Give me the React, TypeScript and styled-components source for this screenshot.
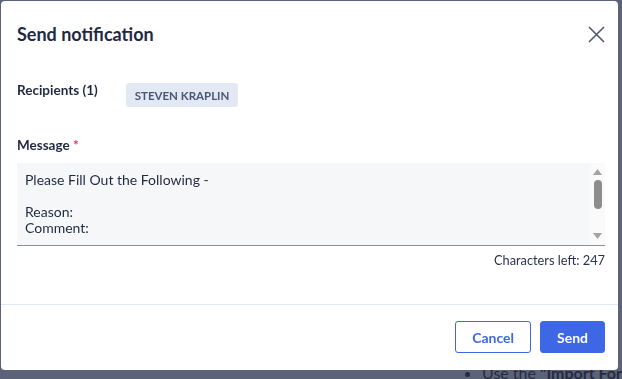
import React from "react";
import styled, { createGlobalStyle } from "styled-components";

const Global = createGlobalStyle`
  html, body {
    margin: 0;
    padding: 0;
    background: #5c6277;
    font-family: Lato, "Open Sans", sans-serif;
    overflow: hidden;
  }
`;

const message = `Please Fill Out the Following -

Reason:
Comment:


`;

export default function App() {
  return (
    <>
      <Global />
      <Page>
        <BulletList>
          <li>
            Use the <b>"Import Form"</b>
          </li>
        </BulletList>
      </Page>
      <Overlay>
        <Modal>
          <Header>
            <h2>Send notification</h2>
            <CloseButton aria-label="Close">
              <svg width="17" height="17" viewBox="0 0 17 17">
                <path d="M1 1 L16 16 M16 1 L1 16" stroke="#4b5472" strokeWidth="1.5" fill="none" />
              </svg>
            </CloseButton>
          </Header>
          <Body>
            <RecipientsRow>
              <Label>Recipients (1)</Label>
              <Chip>STEVEN KRAPLIN</Chip>
            </RecipientsRow>
            <Field>
              <Label>
                Message <Required>*</Required>
              </Label>
              <InputBox>
                <TextArea defaultValue={message} />
                <Scrollbar>
                  <svg width="9" height="6" viewBox="0 0 9 6">
                    <path d="M4.5 0 L9 6 L0 6 Z" fill="#a3a3a3" />
                  </svg>
                  <Thumb />
                  <svg width="9" height="6" viewBox="0 0 9 6">
                    <path d="M0 0 L9 0 L4.5 6 Z" fill="#a3a3a3" />
                  </svg>
                </Scrollbar>
              </InputBox>
              <Counter>Characters left: 247</Counter>
            </Field>
          </Body>
          <Footer>
            <Button>Cancel</Button>
            <Button $primary>Send</Button>
          </Footer>
        </Modal>
      </Overlay>
    </>
  );
}

const Page = styled.div`
  height: 379px;
  box-sizing: border-box;
  padding: 363px 0 0 465px;
`;

const BulletList = styled.ul`
  margin: 0;
  padding: 0 0 0 17px;
  font-size: 16px;
  white-space: nowrap;
  color: #262b40;
  list-style: disc;

  & b {
    font-weight: 700;
  }
`;

const Overlay = styled.div`
  position: fixed;
  inset: 0;
  padding: 1px 0 0 1px;
`;

const Modal = styled.div`
  width: 617px;
  height: 369px;
  background: #fff;
  border-radius: 4px;
  display: flex;
  flex-direction: column;
`;

const Header = styled.div`
  display: flex;
  align-items: center;
  justify-content: space-between;
  padding: 22px 13px 0 16px;

  & h2 {
    margin: 0;
    font-size: 18px;
    font-weight: 700;
    color: #1f2942;
  }
`;

const CloseButton = styled.button`
  border: 0;
  background: none;
  padding: 0;
  width: 17px;
  height: 17px;
  display: flex;
  cursor: pointer;
`;

const Body = styled.div`
  flex: 1;
  padding: 37px 13px 0 16px;
  border-bottom: 1px solid #e2e9f6;
`;

const RecipientsRow = styled.div`
  display: flex;
  align-items: flex-start;
  gap: 28px;
`;

const Label = styled.div`
  font-size: 13.5px;
  line-height: 16px;
  font-weight: 700;
  color: #1f2942;
`;

const Required = styled.span`
  color: #e2384d;
`;

const Chip = styled.span`
  margin-top: 1px;
  background: #e3e9f4;
  border-radius: 3px;
  padding: 0 9px;
  height: 24px;
  display: inline-flex;
  align-items: center;
  font-size: 11.5px;
  font-weight: 700;
  color: #4b5575;
`;

const Field = styled.div`
  margin-top: 30px;
  display: flex;
  flex-direction: column;
`;

const InputBox = styled.div`
  margin-top: 10px;
  height: 82px;
  display: flex;
  background: #f6f7f9;
  border-bottom: 1px solid #8b909f;
`;

const TextArea = styled.textarea`
  flex: 1;
  resize: none;
  border: 0;
  background: transparent;
  padding: 9px 8px;
  font-family: inherit;
  font-size: 14px;
  line-height: 16px;
  color: #1f2942;
  outline: none;
  overflow: hidden;
`;

const Scrollbar = styled.div`
  width: 15px;
  background: #fafafa;
  display: flex;
  flex-direction: column;
  align-items: center;
  padding: 6px 0 6px;
  gap: 5px;

  & svg:last-child {
    margin-top: auto;
  }
`;

const Thumb = styled.div`
  width: 8px;
  height: 29px;
  border-radius: 4px;
  background: #8d8d8d;
`;

const Counter = styled.div`
  align-self: flex-end;
  margin-top: 6px;
  font-size: 12.8px;
  color: #2a3350;
`;

const Footer = styled.div`
  display: flex;
  justify-content: flex-end;
  gap: 9px;
  padding: 16px 13px 17px 0;
`;

const Button = styled.button<{ $primary?: boolean }>`
  height: 32px;
  padding: 0 16px;
  border-radius: 3px;
  border: 1px solid #3d67e4;
  background: ${(p) => (p.$primary ? "#3d67e4" : "#fff")};
  color: ${(p) => (p.$primary ? "#fff" : "#3d67e4")};
  font-family: inherit;
  font-size: 14px;
  font-weight: 700;
  cursor: pointer;
`;
